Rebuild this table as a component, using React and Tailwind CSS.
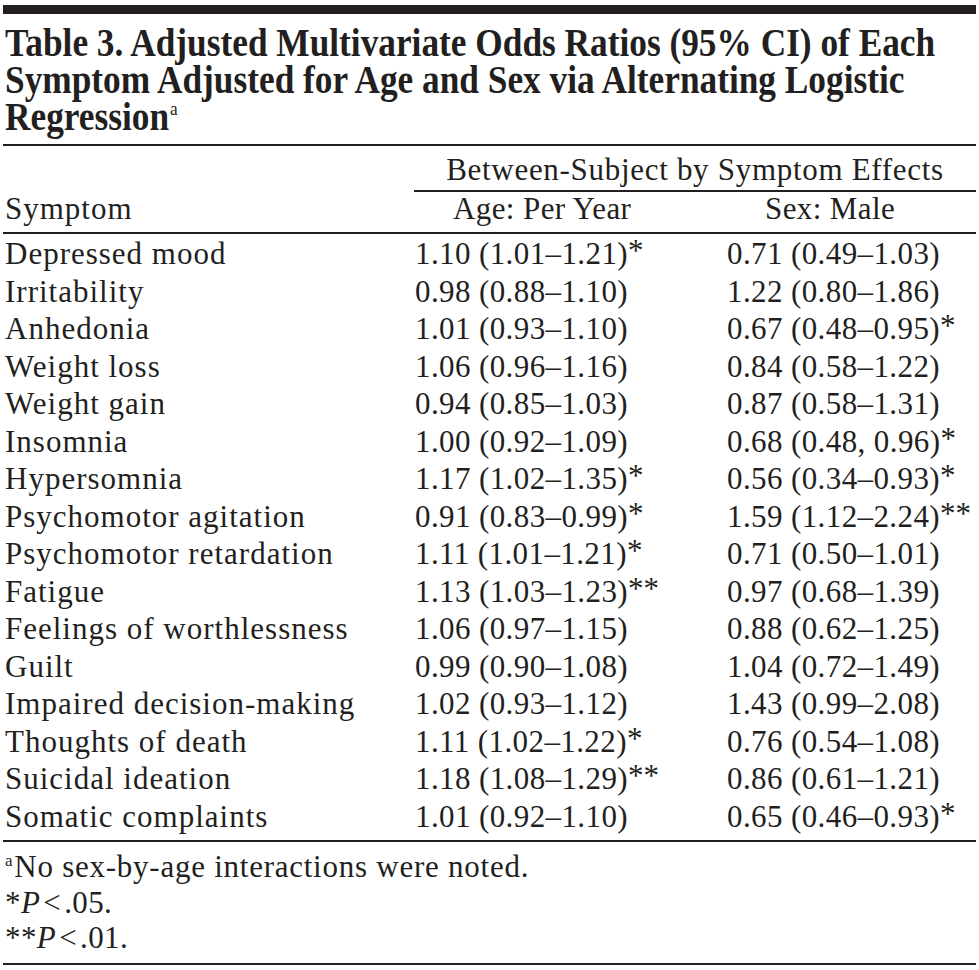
import React from 'react';

const rows = [
  ['Depressed mood', '1.10 (1.01–1.21)*', '0.71 (0.49–1.03)'],
  ['Irritability', '0.98 (0.88–1.10)', '1.22 (0.80–1.86)'],
  ['Anhedonia', '1.01 (0.93–1.10)', '0.67 (0.48–0.95)*'],
  ['Weight loss', '1.06 (0.96–1.16)', '0.84 (0.58–1.22)'],
  ['Weight gain', '0.94 (0.85–1.03)', '0.87 (0.58–1.31)'],
  ['Insomnia', '1.00 (0.92–1.09)', '0.68 (0.48, 0.96)*'],
  ['Hypersomnia', '1.17 (1.02–1.35)*', '0.56 (0.34–0.93)*'],
  ['Psychomotor agitation', '0.91 (0.83–0.99)*', '1.59 (1.12–2.24)**'],
  ['Psychomotor retardation', '1.11 (1.01–1.21)*', '0.71 (0.50–1.01)'],
  ['Fatigue', '1.13 (1.03–1.23)**', '0.97 (0.68–1.39)'],
  ['Feelings of worthlessness', '1.06 (0.97–1.15)', '0.88 (0.62–1.25)'],
  ['Guilt', '0.99 (0.90–1.08)', '1.04 (0.72–1.49)'],
  ['Impaired decision-making', '1.02 (0.93–1.12)', '1.43 (0.99–2.08)'],
  ['Thoughts of death', '1.11 (1.02–1.22)*', '0.76 (0.54–1.08)'],
  ['Suicidal ideation', '1.18 (1.08–1.29)**', '0.86 (0.61–1.21)'],
  ['Somatic complaints', '1.01 (0.92–1.10)', '0.65 (0.46–0.93)*'],
];

// split trailing asterisks so they sit a bit higher, like the print
const Value = ({ text }) => {
  const m = text.match(/^(.*?)(\**)$/);
  return (
    <span>
      {m[1]}
      {m[2] && <span className="relative -top-[3px] tracking-normal">{m[2]}</span>}
    </span>
  );
};

const TitleLine = ({ children }) => (
  <div className="h-[37px] whitespace-nowrap">
    <span className="inline-block origin-left scale-x-[0.905]">{children}</span>
  </div>
);

export default function App() {
  return (
    <div
      className="min-h-screen w-[979px] overflow-hidden bg-white px-[3px] pt-[5px] text-[#231f20]"
      style={{ fontFamily: '"Liberation Serif", "Times New Roman", serif' }}
    >
      <div className="h-[9px] bg-[#231f20]" />

      <div className="pl-[2px] pt-[10px] pb-[9px] text-[39px] font-bold leading-[37px]">
        <TitleLine>Table 3. Adjusted Multivariate Odds Ratios (95% CI) of Each</TitleLine>
        <TitleLine>Symptom Adjusted for Age and Sex via Alternating Logistic</TitleLine>
        <TitleLine>
          Regression
          <span className="relative -top-[15px] ml-[1px] text-[19px] leading-none font-normal">a</span>
        </TitleLine>
      </div>

      <div className="border-t-2 border-[#231f20] text-[31px] tracking-[0.4px]">
        <div className="grid grid-cols-[411px_312px_1fr] pt-[4px]">
          <div />
          <div className="col-span-2 border-b-2 border-[#231f20] text-center leading-[40px] tracking-[0.7px]">
            Between-Subject by Symptom Effects
          </div>
        </div>
        <div className="grid grid-cols-[411px_312px_1fr] border-b-2 border-[#231f20] pt-[1px] pb-[7px] leading-[32px]">
          <div className="pl-[2px] tracking-[1px]">Symptom</div>
          <div className="pl-[39px]">Age: Per Year</div>
          <div className="pl-[39px]">Sex: Male</div>
        </div>

        <div className="border-b-2 border-[#231f20] pt-[1px] pb-[5px]">
          {rows.map(([name, age, sex]) => (
            <div key={name} className="grid grid-cols-[411px_312px_1fr] leading-[37.5px]">
              <div className="whitespace-nowrap pl-[2px] tracking-[1px]">{name}</div>
              <div className="whitespace-nowrap pl-[1px]">
                <Value text={age} />
              </div>
              <div className="whitespace-nowrap pl-[1px]">
                <Value text={sex} />
              </div>
            </div>
          ))}
        </div>

        <div className="border-b-2 border-[#231f20] pl-[2px] pt-[7px] pb-[7px] leading-[35.5px]">
          <div className="tracking-[0.75px]">
            <span className="relative -top-[11px] mr-[1px] text-[17px] leading-none">a</span>No sex-by-age interactions were noted.
          </div>
          <div>
            *<i>P</i>
            <span className="mx-[3px]">&lt;</span>.05.
          </div>
          <div>
            **<i>P</i>
            <span className="mx-[3px]">&lt;</span>.01.
          </div>
        </div>
      </div>
    </div>
  );
}
